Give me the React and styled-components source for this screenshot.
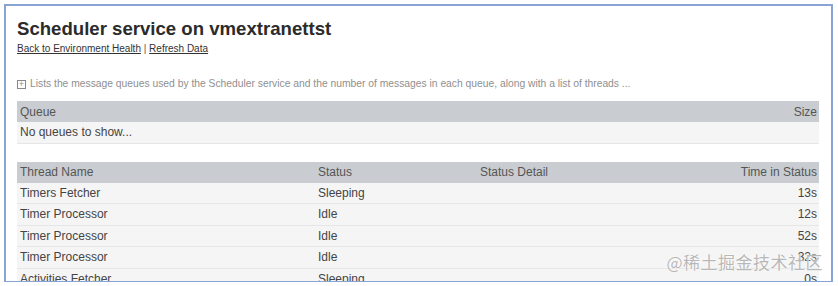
import React from 'react';
import styled, { createGlobalStyle } from 'styled-components';

const GlobalStyle = createGlobalStyle`
    html, body {
        margin: 0;
        padding: 0;
        background: #ffffff;
        font-family: "Liberation Sans", Arial, sans-serif;
    }
`;

const Frame = styled.div`
    position: relative;
    box-sizing: border-box;
    margin: 4px 5px 0 4px;
    height: 278px;
    border: 2px solid #88a4d4;
    border-bottom-width: 1px;
    overflow: hidden;
    padding: 11px 11px 0 11px;
`;

const Title = styled.h1`
    margin: 0;
    font-size: 18.6px;
    line-height: 24px;
    font-weight: bold;
    color: #2b2b2b;
`;

const Links = styled.div`
    margin-top: 1px;
    font-size: 10px;
    line-height: 13px;
    color: #555;
`;

const Link = styled.a`
    color: #333;
    text-decoration: underline;
`;

const Description = styled.div`
    display: flex;
    align-items: center;
    gap: 4px;
    margin-top: 22px;
    font-size: 10.3px;
    line-height: 14px;
    color: #8f8f8f;
`;

const PlusBox = styled.span`
    display: inline-flex;
    align-items: center;
    justify-content: center;
    box-sizing: border-box;
    width: 9px;
    height: 9px;
    border: 1px solid #8a8a8a;
    font-size: 9px;
    line-height: 1;
`;

const Table = styled.div`
    margin-top: ${p => p.$top}px;
    margin-right: 1px;
    font-size: 12px;
    color: #444;
`;

const Row = styled.div`
    display: grid;
    grid-template-columns: ${p => p.$cols};
    align-items: center;
    height: ${p => (p.$head ? 21 : 21.5)}px;
    padding: 0 2px 0 3px;
    background: ${p => (p.$head ? '#c9cdd1' : '#f5f5f5')};
    color: ${p => (p.$head ? '#555' : '#444')};
    border-bottom: ${p => (p.$head ? 'none' : '1px solid #e6e6e6')};
    box-sizing: border-box;
`;

const Cell = styled.div`
    text-align: ${p => p.$align || 'left'};
    white-space: nowrap;
    overflow: hidden;
`;

const Watermark = styled.div`
    position: absolute;
    right: 8px;
    bottom: 7px;
    font-family: "Noto Sans CJK SC", sans-serif;
    font-size: 17px;
    color: rgba(160, 160, 160, 0.75);
    text-shadow: 0 0 2px #fff, 0 0 1px #fff;
    letter-spacing: 0.5px;
`;

const threads = [
    { name: 'Timers Fetcher', status: 'Sleeping', detail: '', time: '13s' },
    { name: 'Timer Processor', status: 'Idle', detail: '', time: '12s' },
    { name: 'Timer Processor', status: 'Idle', detail: '', time: '52s' },
    { name: 'Timer Processor', status: 'Idle', detail: '', time: '32s' },
    { name: 'Activities Fetcher', status: 'Sleeping', detail: '', time: '0s' },
];

const threadCols = '298px 162px 1fr 120px';

function App() {
    return (
        <>
            <GlobalStyle />
            <Frame>
                <Title>Scheduler service on vmextranettst</Title>
                <Links>
                    <Link href="#">Back to Environment Health</Link> | <Link href="#">Refresh Data</Link>
                </Links>
                <Description>
                    <PlusBox>+</PlusBox>
                    Lists the message queues used by the Scheduler service and the number of messages in each queue, along with a list of threads ...
                </Description>

                <Table $top={10}>
                    <Row $head $cols="1fr 100px">
                        <Cell>Queue</Cell>
                        <Cell $align="right">Size</Cell>
                    </Row>
                    <Row $cols="1fr">
                        <Cell>No queues to show...</Cell>
                    </Row>
                </Table>

                <Table $top={18}>
                    <Row $head $cols={threadCols}>
                        <Cell>Thread Name</Cell>
                        <Cell>Status</Cell>
                        <Cell>Status Detail</Cell>
                        <Cell $align="right">Time in Status</Cell>
                    </Row>
                    {threads.map((t, i) => (
                        <Row key={i} $cols={threadCols}>
                            <Cell>{t.name}</Cell>
                            <Cell>{t.status}</Cell>
                            <Cell>{t.detail}</Cell>
                            <Cell $align="right">{t.time}</Cell>
                        </Row>
                    ))}
                </Table>
                <Watermark>@稀土掘金技术社区</Watermark>
            </Frame>
        </>
    );
}

export default App;
